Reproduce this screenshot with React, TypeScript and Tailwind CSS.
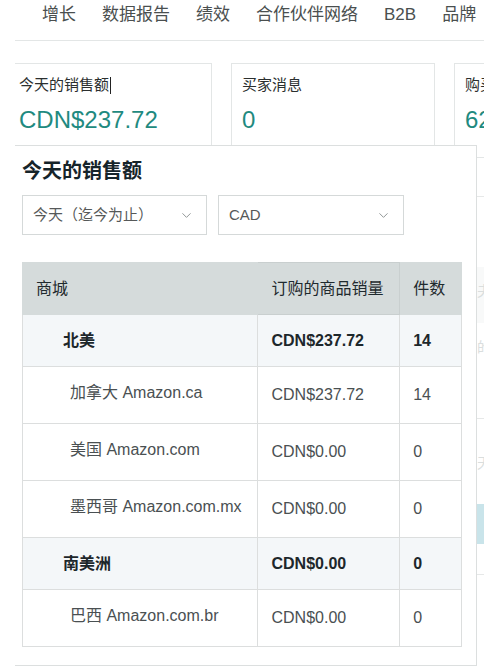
import { ChevronDown } from "lucide-react";

const font = { fontFamily: '"Liberation Sans", "Noto Sans CJK SC", sans-serif' };

type Row = { name: string; sales: string; units: string; group?: boolean };

const rows: Row[] = [
  { name: "北美", sales: "CDN$237.72", units: "14", group: true },
  { name: "加拿大 Amazon.ca", sales: "CDN$237.72", units: "14" },
  { name: "美国 Amazon.com", sales: "CDN$0.00", units: "0" },
  { name: "墨西哥 Amazon.com.mx", sales: "CDN$0.00", units: "0" },
  { name: "南美洲", sales: "CDN$0.00", units: "0", group: true },
  { name: "巴西 Amazon.com.br", sales: "CDN$0.00", units: "0" },
];

const navItems = ["增长", "数据报告", "绩效", "合作伙伴网络", "B2B", "品牌"];

function Select({ label, width }: { label: string; width: string }) {
  return (
    <div className={`flex h-[40px] items-center justify-between border border-[#d5d9d9] bg-white pl-[10px] pr-[12px] ${width}`}>
      <span className="text-[15px] text-[#565959]">{label}</span>
      <ChevronDown className="h-[15px] w-[15px] text-[#8a8f8f]" strokeWidth={1.5} />
    </div>
  );
}

export default function App() {
  return (
    <div className="relative h-[667px] w-[500px] overflow-hidden bg-white" style={font}>
      <div className="ml-[15px] w-[469px] overflow-hidden">
        <nav className="flex h-[41px] gap-[26px] border-b border-[#e3e6e6] pl-[27px] pt-[4px] text-[17px] leading-[22px] text-[#4a4f4f]">
          {navItems.map((n) => (
            <span key={n}>{n}</span>
          ))}
        </nav>

        <div className="-ml-[7px] mt-[22px] flex gap-[19px]">
          <div className="h-[95px] w-[204px] shrink-0 border border-[#e3e6e6] pl-[10px] pt-[10px]">
            <div className="flex items-center text-[15px] text-[#2b2f2f]">
              今天的销售额
              <span className="ml-[1px] inline-block h-[17px] w-[1px] bg-[#222]" />
            </div>
            <div className="mt-[9px] text-[24px] leading-[28px] text-[#1f8a80]">CDN$237.72</div>
          </div>
          <div className="h-[95px] w-[204px] shrink-0 border border-[#e3e6e6] pl-[10px] pt-[10px]">
            <div className="text-[15px] text-[#2b2f2f]">买家消息</div>
            <div className="mt-[9px] text-[24px] leading-[28px] text-[#1f8a80]">0</div>
          </div>
          <div className="h-[95px] w-[120px] shrink-0 border border-[#e3e6e6] pl-[10px] pt-[10px]">
            <div className="text-[15px] text-[#2b2f2f]">购买按钮</div>
            <div className="mt-[9px] text-[24px] leading-[28px] text-[#1f8a80]">62%</div>
          </div>
        </div>

        <div className="flex justify-end">
          <div className="flex w-[7px] flex-col text-[14px] text-[#dadede]">
            <div className="mt-[38px] border-t border-[#e6e8e8]" />
            <div className="mt-[70px] h-[56px] bg-[#f8f9f9] pt-[14px]">夫</div>
            <div className="mt-[14px]">的</div>
            <div className="mt-[60px] border-t border-[#e6e8e8]" />
            <div className="mt-[34px]">天</div>
            <div className="mt-[30px] h-[40px] bg-[#c9e4ea]" />
            <div className="mt-[30px] border-t border-[#e6e8e8]" />
          </div>
        </div>
      </div>

      <div className="absolute left-[15px] top-[145px] h-[521px] w-[462px] border-b border-r border-t border-[#dcdfdf] bg-white pl-[7px]">
        <h2 className="pt-[12px] text-[20px] font-bold leading-[26px] text-[#16242a]">今天的销售额</h2>
        <div className="mt-[11px] flex gap-[11px]">
          <Select label="今天（迄今为止）" width="w-[185px]" />
          <Select label="CAD" width="w-[186px]" />
        </div>

        <table className="mt-[27px] w-[440px] border-collapse text-[16px]">
          <thead>
            <tr className="h-[52px] bg-[#d5dbdb] text-left text-[#1f2a2e]">
              <th className="w-[236px] border border-[#d5dbdb] pl-[13px] font-normal">商城</th>
              <th className="w-[142px] border border-[#c9cfcf] pl-[13px] font-normal">订购的商品销量</th>
              <th className="w-[62px] border border-[#d5dbdb] pl-[13px] font-normal">件数</th>
            </tr>
          </thead>
          <tbody>
            {rows.map((r) =>
              r.group ? (
                <tr key={r.name} className="h-[52px] bg-[#f4f7f9] font-bold text-[#1d272b]">
                  <td className="border border-[#dcdede] pl-[40px]">{r.name}</td>
                  <td className="border border-[#dcdede] pl-[13px]">{r.sales}</td>
                  <td className="border border-[#dcdede] pl-[13px]">{r.units}</td>
                </tr>
              ) : (
                <tr key={r.name} className="h-[57px] bg-white text-[#4a5052]">
                  <td className="border border-[#dcdede] pb-[4px] pl-[47px]">{r.name}</td>
                  <td className="border border-[#dcdede] pl-[13px]">{r.sales}</td>
                  <td className="border border-[#dcdede] pl-[13px]">{r.units}</td>
                </tr>
              )
            )}
          </tbody>
        </table>
      </div>
    </div>
  );
}
